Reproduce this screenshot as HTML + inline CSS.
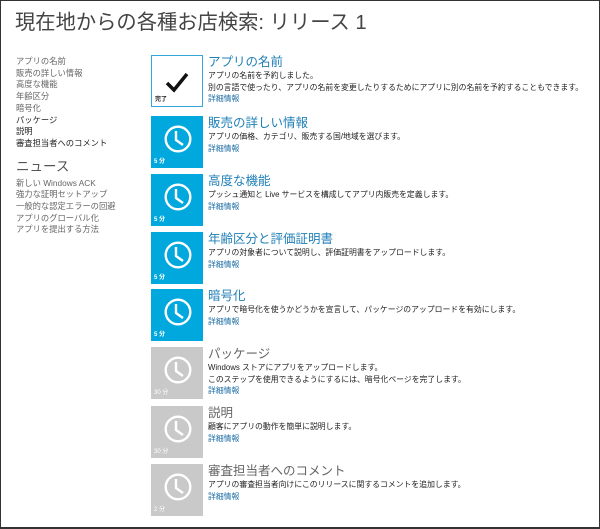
<!DOCTYPE html>
<html><head><meta charset="utf-8"><style>
*{margin:0;padding:0;box-sizing:border-box}
body{width:600px;height:529px;background:#fff;font-family:"Liberation Sans","Noto Sans CJK JP",sans-serif;position:relative;overflow:hidden}
.frame{position:absolute;left:0;top:0;width:600px;height:529px;border:1px solid #333;border-bottom-width:2px}
h1{position:absolute;left:15px;top:5px;font-size:20.3px;font-weight:normal;color:#444;white-space:nowrap}
.nav{position:absolute;left:16px;top:56px;font-size:8.3px;line-height:11.7px;color:#666}
.nav .d{color:#222}
.nav h2{font-size:13.5px;font-weight:normal;color:#555;margin:9px 0 3px;line-height:16px}
.item{position:absolute;left:151px;width:440px}
.tile{position:absolute;left:0;top:0;width:52px;height:52px;background:#00a8de}
.tile.g{background:#c9c9c9}
.tile.w{background:#fff;border:1px solid #32a6d6}
.tile svg{position:absolute;left:13px;top:9px}
.tile span{position:absolute;left:3px;bottom:3px;font-size:6px;color:#fff;font-weight:bold}
.tile.w span{color:#222}
.txt{position:absolute;left:57px;top:0px;white-space:nowrap}
.t{font-size:12.5px;line-height:15px;color:#1f7fb6}
.t.g{color:#666}
.p{font-size:7.85px;line-height:11.5px;color:#222}
.l{font-size:7.85px;line-height:11.5px;color:#1f6fa6}
</style></head><body>
<div class="frame"></div>
<h1>現在地からの各種お店検索: リリース 1</h1>
<div class="nav">
<div>アプリの名前</div><div>販売の詳しい情報</div><div>高度な機能</div><div>年齢区分</div><div>暗号化</div>
<div class="d">パッケージ</div><div class="d">説明</div><div class="d">審査担当者へのコメント</div>
<h2>ニュース</h2>
<div>新しい Windows ACK</div><div>強力な証明セットアップ</div><div>一般的な認定エラーの回避</div><div>アプリのグローバル化</div><div>アプリを提出する方法</div>
</div>

<div class="item" style="top:55px"><div class="tile w"><svg width="28" height="28" viewBox="0 0 28 28" style="left:11px;top:12px"><path d="M4 15 L11 22 L24 6" fill="none" stroke="#111" stroke-width="3.5"/></svg><span>完了</span></div>
<div class="txt"><div class="t">アプリの名前</div><div class="p">アプリの名前を予約しました。</div><div class="p">別の言語で使ったり、アプリの名前を変更したりするためにアプリに別の名前を予約することもできます。</div><div class="l">詳細情報</div></div></div>

<div class="item" style="top:116px"><div class="tile"><svg width="28" height="28" viewBox="0 0 28 28"><circle cx="14" cy="14" r="12.3" fill="none" stroke="#fff" stroke-width="2.4"/><path d="M12 6 V15 L19 20" fill="none" stroke="#fff" stroke-width="2.4"/></svg><span>5 分</span></div>
<div class="txt"><div class="t">販売の詳しい情報</div><div class="p">アプリの価格、カテゴリ、販売する国/地域を選びます。</div><div class="l">詳細情報</div></div></div>

<div class="item" style="top:174px"><div class="tile"><svg width="28" height="28" viewBox="0 0 28 28"><circle cx="14" cy="14" r="12.3" fill="none" stroke="#fff" stroke-width="2.4"/><path d="M12 6 V15 L19 20" fill="none" stroke="#fff" stroke-width="2.4"/></svg><span>5 分</span></div>
<div class="txt"><div class="t">高度な機能</div><div class="p">プッシュ通知と Live サービスを構成してアプリ内販売を定義します。</div><div class="l">詳細情報</div></div></div>

<div class="item" style="top:232px"><div class="tile"><svg width="28" height="28" viewBox="0 0 28 28"><circle cx="14" cy="14" r="12.3" fill="none" stroke="#fff" stroke-width="2.4"/><path d="M12 6 V15 L19 20" fill="none" stroke="#fff" stroke-width="2.4"/></svg><span>5 分</span></div>
<div class="txt"><div class="t">年齢区分と評価証明書</div><div class="p">アプリの対象者について説明し、評価証明書をアップロードします。</div><div class="l">詳細情報</div></div></div>

<div class="item" style="top:289px"><div class="tile"><svg width="28" height="28" viewBox="0 0 28 28"><circle cx="14" cy="14" r="12.3" fill="none" stroke="#fff" stroke-width="2.4"/><path d="M12 6 V15 L19 20" fill="none" stroke="#fff" stroke-width="2.4"/></svg><span>5 分</span></div>
<div class="txt"><div class="t">暗号化</div><div class="p">アプリで暗号化を使うかどうかを宣言して、パッケージのアップロードを有効にします。</div><div class="l">詳細情報</div></div></div>

<div class="item" style="top:347px"><div class="tile g"><svg width="28" height="28" viewBox="0 0 28 28"><circle cx="14" cy="14" r="12.3" fill="none" stroke="#fff" stroke-width="2.4"/><path d="M12 6 V15 L19 20" fill="none" stroke="#fff" stroke-width="2.4"/></svg><span style="font-weight:normal">30 分</span></div>
<div class="txt"><div class="t g">パッケージ</div><div class="p">Windows ストアにアプリをアップロードします。</div><div class="p">このステップを使用できるようにするには、暗号化ページを完了します。</div><div class="l">詳細情報</div></div></div>

<div class="item" style="top:406px"><div class="tile g"><svg width="28" height="28" viewBox="0 0 28 28"><circle cx="14" cy="14" r="12.3" fill="none" stroke="#fff" stroke-width="2.4"/><path d="M12 6 V15 L19 20" fill="none" stroke="#fff" stroke-width="2.4"/></svg><span style="font-weight:normal">30 分</span></div>
<div class="txt"><div class="t g">説明</div><div class="p">顧客にアプリの動作を簡単に説明します。</div><div class="l">詳細情報</div></div></div>

<div class="item" style="top:464px"><div class="tile g"><svg width="28" height="28" viewBox="0 0 28 28"><circle cx="14" cy="14" r="12.3" fill="none" stroke="#fff" stroke-width="2.4"/><path d="M12 6 V15 L19 20" fill="none" stroke="#fff" stroke-width="2.4"/></svg><span style="font-weight:normal">2 分</span></div>
<div class="txt"><div class="t g">審査担当者へのコメント</div><div class="p">アプリの審査担当者向けにこのリリースに関するコメントを追加します。</div><div class="l">詳細情報</div></div></div>
</body></html>
